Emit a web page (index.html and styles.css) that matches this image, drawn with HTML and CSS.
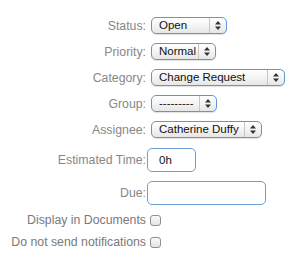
FILE: index.html
```html
<!DOCTYPE html>
<html lang="en">
<head>
  <meta charset="UTF-8" />
  <title>Ticket fields</title>
  <link rel="stylesheet" href="styles.css">
</head>
<body>

  <form class="fields">
    <label class="field-label">Status:</label>
    <div class="select w-status"><span class="value">Open</span><span class="arrows"><svg width="6" height="9" viewBox="0 0 6 9"><path d="M0 3.5 L3 0 L6 3.5 Z M0 5.5 L3 9 L6 5.5 Z" fill="#333"/></svg></span></div>

    <label class="field-label">Priority:</label>
    <div class="select w-priority"><span class="value">Normal</span><span class="arrows"><svg width="6" height="9" viewBox="0 0 6 9"><path d="M0 3.5 L3 0 L6 3.5 Z M0 5.5 L3 9 L6 5.5 Z" fill="#333"/></svg></span></div>

    <label class="field-label">Category:</label>
    <div class="select w-category"><span class="value">Change Request</span><span class="arrows"><svg width="6" height="9" viewBox="0 0 6 9"><path d="M0 3.5 L3 0 L6 3.5 Z M0 5.5 L3 9 L6 5.5 Z" fill="#333"/></svg></span></div>

    <label class="field-label">Group:</label>
    <div class="select w-group"><span class="value">---------</span><span class="arrows"><svg width="6" height="9" viewBox="0 0 6 9"><path d="M0 3.5 L3 0 L6 3.5 Z M0 5.5 L3 9 L6 5.5 Z" fill="#333"/></svg></span></div>

    <label class="field-label">Assignee:</label>
    <div class="select w-assignee"><span class="value">Catherine Duffy</span><span class="arrows"><svg width="6" height="9" viewBox="0 0 6 9"><path d="M0 3.5 L3 0 L6 3.5 Z M0 5.5 L3 9 L6 5.5 Z" fill="#333"/></svg></span></div>

    <label class="field-label gap-top">Estimated Time:</label>
    <input class="text-input w-time gap-top" type="text" value="0h">

    <label class="field-label">Due:</label>
    <input class="text-input w-due" type="text" value="">

    <label class="field-label check-label">Display in Documents</label>
    <span class="check"></span>

    <label class="field-label check-label">Do not send notifications</label>
    <span class="check"></span>
  </form>

</body>
</html>
```

FILE: styles.css
```css
body {
  margin: 0;
  background: #ffffff;
  font-family: "Liberation Sans", Arial, sans-serif;
}

.fields {
  display: grid;
  grid-template-columns: 146px auto;
  column-gap: 1px;
  row-gap: 9px;
  align-items: center;
  justify-items: start;
  padding-top: 17px;
}

.field-label {
  justify-self: end;
  color: #878787;
  font-size: 12.3px;
  line-height: 16px;
}

.check-label {
  line-height: 13px;
  color: #7a7a7a;
}

.gap-top {
  margin-top: 1px;
}

.select {
  display: flex;
  align-items: stretch;
  height: 17px;
  box-sizing: border-box;
  margin-left: 4px;
  border: 1px solid #5e97d6;
  border-radius: 5px;
  background: linear-gradient(#ffffff, #f3f3f3 55%, #e6e6e6);
  box-shadow: 0 1px 1px rgba(0, 0, 0, 0.12);
  font-size: 11.5px;
  color: #111;
}

.select .value {
  flex: 1;
  padding-left: 7px;
  line-height: 15px;
  white-space: nowrap;
  overflow: hidden;
}

.select .arrows {
  width: 16px;
  border-left: 1px solid #c6c6c6;
  display: flex;
  align-items: center;
  justify-content: center;
}

.w-status { width: 76px; }
.w-priority { width: 65px; }
.w-category { width: 134px; }
.w-group { width: 66px; }
.w-assignee { width: 111px; }

.text-input {
  height: 24px;
  box-sizing: border-box;
  border: 1px solid #6a9fd9;
  border-radius: 5px;
  padding: 0 0 0 11px;
  font-family: "Liberation Sans", Arial, sans-serif;
  font-size: 11.5px;
  color: #111;
  background: #fff;
  outline: none;
}

.w-time { width: 49px; }
.w-due { width: 119px; }

.check {
  display: block;
  width: 11px;
  height: 11px;
  box-sizing: border-box;
  margin-left: 3px;
  border: 1px solid #8f8f8f;
  border-radius: 3px;
  background: linear-gradient(#fafafa, #e3e3e3);
}
```
